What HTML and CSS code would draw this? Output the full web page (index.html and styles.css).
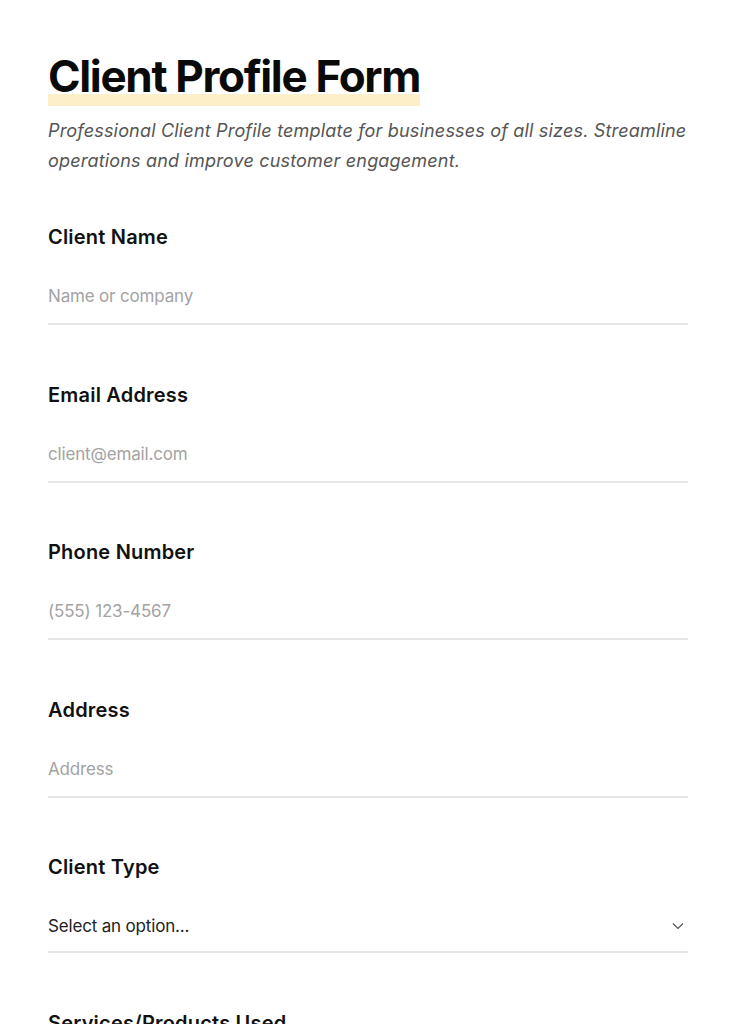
FILE: index.html
```html
<!DOCTYPE html>
<html lang="en">
<head>
    <meta charset="UTF-8">
    <meta name="viewport" content="width=device-width, initial-scale=1.0">
    <title>Client Profile Form</title>
    <link rel="stylesheet" href="styles.css">
</head>
<body>
    <main class="container">
        <header class="form-header">
            <h1><span class="highlight">Client Profile Form</span></h1>
            <p class="subtitle">Professional Client Profile template for businesses of all sizes. Streamline operations and improve customer engagement.</p>
        </header>

        <form id="clientForm">
            <div class="form-group">
                <label for="name">Client Name</label>
                <input type="text" id="name" placeholder="Name or company">
            </div>
            <div class="form-group">
                <label for="email">Email Address</label>
                <input type="email" id="email" placeholder="client@email.com">
            </div>
            <div class="form-group">
                <label for="phone">Phone Number</label>
                <input type="tel" id="phone" placeholder="(555) 123-4567">
            </div>
            <div class="form-group">
                <label for="address">Address</label>
                <input type="text" id="address" placeholder="Address">
            </div>
            <div class="form-group">
                <label for="type">Client Type</label>
                <div class="select-wrap">
                    <select id="type">
                        <option>Select an option...</option>
                        <option>Individual</option>
                        <option>Small Business</option>
                        <option>Enterprise</option>
                    </select>
                    <svg class="chevron" width="14" height="14" viewBox="0 0 14 14" fill="none" stroke="#555" stroke-width="1.2">
                        <path d="M2 4.5l5 5 5-5"/>
                    </svg>
                </div>
            </div>
            <div class="form-group">
                <label for="services">Services/Products Used</label>
                <input type="text" id="services" placeholder="Services or products">
            </div>
        </form>
    </main>
</body>
</html>
```

FILE: styles.css
```css
* {
    margin: 0;
    padding: 0;
    box-sizing: border-box;
}

body {
    background: #ffffff;
    color: #111111;
    font-family: Inter, "Liberation Sans", sans-serif;
}

.container {
    max-width: 736px;
    padding: 48px 48px;
}

.form-header h1 {
    font-size: 44px;
    font-weight: 700;
    letter-spacing: -0.03em;
    line-height: 56px;
    color: #0a0a0a;
}

.highlight {
    display: inline-block;
    padding-bottom: 2px;
    background: linear-gradient(to top, #fdf0c8 12px, transparent 12px);
}

.subtitle {
    margin-top: 10px;
    font-size: 18px;
    font-style: italic;
    line-height: 30px;
    color: #555555;
    letter-spacing: 0.01em;
}

form {
    margin-top: 47px;
}

.form-group {
    margin-bottom: 55.5px;
}

.form-group label {
    display: block;
    font-size: 20px;
    font-weight: 600;
    letter-spacing: 0.01em;
    line-height: 28px;
    color: #111111;
}

.form-group input,
.form-group select {
    display: block;
    width: 100%;
    margin-top: 32px;
    padding: 0 0 14px;
    border: none;
    border-bottom: 2px solid #e6e6e6;
    background: transparent;
    font-family: inherit;
    font-size: 17px;
    letter-spacing: -0.01em;
    line-height: 26px;
    color: #222222;
    outline: none;
    appearance: none;
    border-radius: 0;
}

.form-group input::placeholder {
    color: #a3a3a3;
}

.select-wrap {
    position: relative;
    margin-top: 32px;
}

.form-group .select-wrap select {
    margin-top: 0;
    padding-bottom: 12px;
}

.chevron {
    position: absolute;
    right: 3px;
    top: 6px;
    pointer-events: none;
}
```
